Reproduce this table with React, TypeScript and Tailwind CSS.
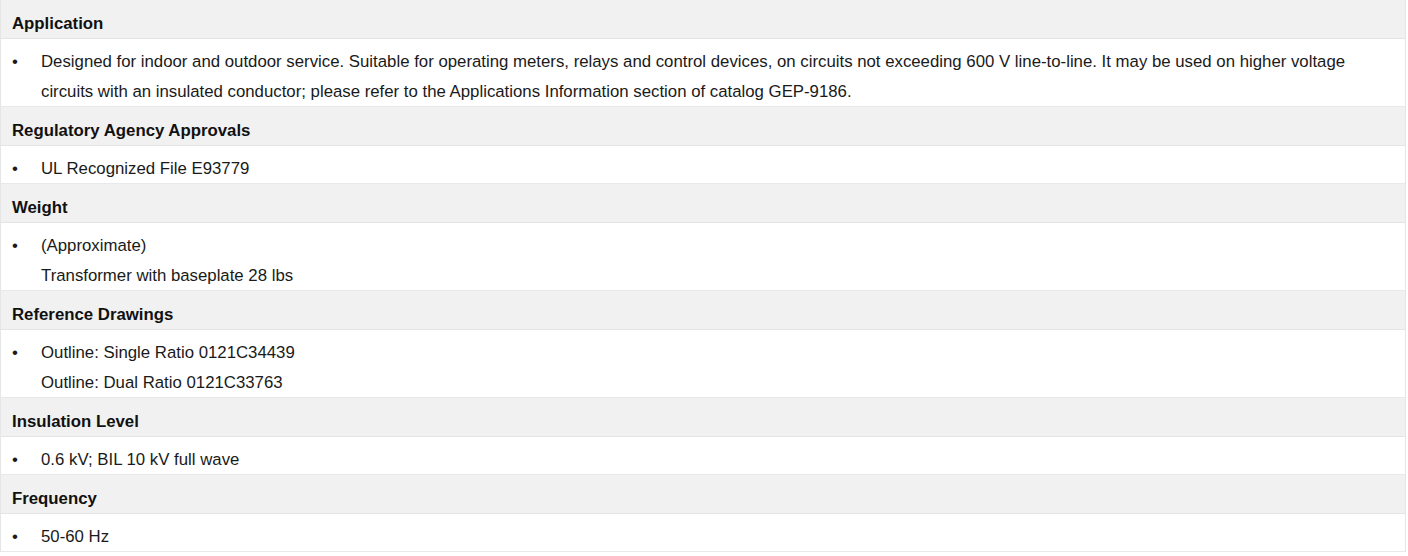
type Section = {
  title: string;
  lines: string[][];
};

const sections: Section[] = [
  {
    title: 'Application',
    lines: [
      [
        'Designed for indoor and outdoor service. Suitable for operating meters, relays and control devices, on circuits not exceeding 600 V line-to-line. It may be used on higher voltage',
        'circuits with an insulated conductor; please refer to the Applications Information section of catalog GEP-9186.',
      ],
    ],
  },
  { title: 'Regulatory Agency Approvals', lines: [['UL Recognized File E93779']] },
  { title: 'Weight', lines: [['(Approximate)', 'Transformer with baseplate 28 lbs']] },
  {
    title: 'Reference Drawings',
    lines: [['Outline: Single Ratio 0121C34439', 'Outline: Dual Ratio 0121C33763']],
  },
  { title: 'Insulation Level', lines: [['0.6 kV; BIL 10 kV full wave']] },
  { title: 'Frequency', lines: [['50-60 Hz']] },
];

function SpecRow({ section }: { section: Section }) {
  return (
    <>
      <div className="h-[39px] bg-[#f1f1f1] border-b border-[#e4e4e4] pl-[11px] pt-[10px] text-[16.8px] leading-[28px] font-bold text-[#111]">
        {section.title}
      </div>
      {section.lines.map((item, i) => (
        <div
          key={i}
          className={`flex bg-white border-b border-[#e8e8e8] pl-[11px] text-[16.8px] text-[#1a1a1a] overflow-hidden ${
            item.length > 1 ? 'h-[68px] pt-[8px] leading-[30px]' : 'h-[38px] pt-[9px] leading-[28px]'
          }`}
        >
          <span className="w-[29px] shrink-0">•</span>
          <div>
            {item.map((l) => (
              <div key={l}>{l}</div>
            ))}
          </div>
        </div>
      ))}
    </>
  );
}

export default function App() {
  return (
    <div className="w-[1408px] h-[556px] bg-white" style={{ fontFamily: '"Liberation Sans", Arial, sans-serif' }}>
      <div className="w-[1406px] border-x border-[#e6e6e6]">
        {sections.map((s) => (
          <SpecRow key={s.title} section={s} />
        ))}
      </div>
    </div>
  );
}
